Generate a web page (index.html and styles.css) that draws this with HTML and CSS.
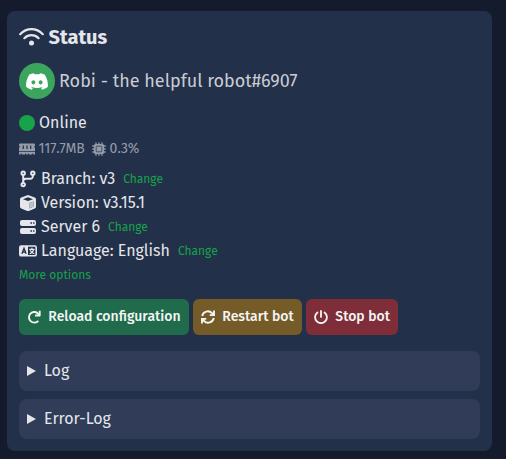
FILE: index.html
```html
<!DOCTYPE html>
<html lang="en">
<head>
<meta charset="utf-8">
<title>Status</title>
<link rel="stylesheet" href="styles.css">
</head>
<body>
<main class="card">
  <h1 class="title">
    <svg class="wifi" viewBox="0 0 25 20" fill="none" stroke="currentColor" stroke-width="2.2" stroke-linecap="round"><path d="M1.2 7.2C7.6 .4 17.4 .4 23.8 7.2M5.4 11.2C9.4 7.2 15.6 7.2 19.6 11.2"/><circle cx="12.5" cy="16" r="2.5" fill="currentColor" stroke="none"/></svg>
    <span>Status</span>
  </h1>
  <div class="bot">
    <span class="avatar"><svg viewBox="0 0 640 512" fill="currentColor"><path d="M524.531,69.836a1.5,1.5,0,0,0-.764-.7A485.065,485.065,0,0,0,404.081,32.03a1.816,1.816,0,0,0-1.923.91,337.461,337.461,0,0,0-14.9,30.6,447.848,447.848,0,0,0-134.426,0,309.541,309.541,0,0,0-15.135-30.6,1.89,1.89,0,0,0-1.924-.91A483.689,483.689,0,0,0,116.085,69.137a1.712,1.712,0,0,0-.788.676C39.068,183.651,18.186,294.69,28.43,404.354a2.016,2.016,0,0,0,.765,1.375A487.666,487.666,0,0,0,176.02,479.918a1.9,1.9,0,0,0,2.063-.676A348.2,348.2,0,0,0,208.12,430.4a1.86,1.86,0,0,0-1.019-2.588,321.173,321.173,0,0,1-45.868-21.853,1.885,1.885,0,0,1-.185-3.126c3.082-2.309,6.166-4.711,9.109-7.137a1.819,1.819,0,0,1,1.9-.256c96.229,43.917,200.41,43.917,295.5,0a1.812,1.812,0,0,1,1.924.233c2.944,2.426,6.027,4.851,9.132,7.16a1.884,1.884,0,0,1-.162,3.126,301.407,301.407,0,0,1-45.89,21.83,1.875,1.875,0,0,0-1,2.611,391.055,391.055,0,0,0,30.014,48.815,1.864,1.864,0,0,0,2.063.7A486.048,486.048,0,0,0,610.7,405.729a1.882,1.882,0,0,0,.765-1.352C623.729,277.594,590.933,167.465,524.531,69.836ZM222.491,337.58c-28.972,0-52.844-26.587-52.844-59.239S193.056,219.1,222.491,219.1c29.665,0,53.306,26.82,52.843,59.239C275.334,310.993,251.924,337.58,222.491,337.58Zm195.38,0c-28.971,0-52.843-26.587-52.843-59.239S388.437,219.1,417.871,219.1c29.667,0,53.307,26.82,52.844,59.239C470.715,310.993,447.538,337.58,417.871,337.58Z"/></svg></span>
    <span>Robi - the helpful robot#6907</span>
  </div>
  <div class="online"><i class="dot"></i><span>Online</span></div>
  <div class="usage">
    <svg class="mem" viewBox="0 0 16 12" fill="currentColor"><path fill-rule="evenodd" d="M1.2 .5h13.6A1.2 1.2 0 0 1 16 1.700v1a1.300 1.300 0 0 0 0 2.300V8H0V5a1.300 1.300 0 0 0 0-2.300v-1A1.200 1.200 0 0 1 1.200 .5ZM3.700 2.500v3.500h1.200V2.500Zm3.700 0v3.500h1.200V2.500Zm3.700 0v3.500h1.200V2.500ZM0 8.700h16v2.800h-1.800v-1.100h-1v1.100H9.900v-1.100h-1v1.100H7.100v-1.100h-1v1.100H2.800v-1.100h-1v1.100H0Z"/></svg>
    <span class="amount">117.7MB</span>
    <svg class="cpu" viewBox="0 0 14 14"><g stroke="currentColor" stroke-width="1.3" stroke-linecap="round"><path d="M4 .8v12.4M7 .8v12.4M10 .8v12.4M.8 4h12.4M.8 7h12.4M.8 10h12.4"/></g><rect x="2" y="2" width="10" height="10" rx="1.6" fill="currentColor"/><rect x="4.2" y="4.2" width="5.6" height="5.6" rx=".6" fill="none" stroke="#233049" stroke-width=".7"/></svg>
    <span>0.3%</span>
  </div>
  <ul class="info">
    <li><svg class="ic" viewBox="0 0 18 18" fill="none" stroke="currentColor" stroke-width="2"><circle cx="4.2" cy="3.2" r="1.7"/><circle cx="13.8" cy="3.2" r="1.7"/><circle cx="4.2" cy="14.6" r="1.7"/><path d="M4.2 5v8M13.8 5v1.400a2.400 2.400 0 0 1-2.400 2.400H6.800a2.600 2.600 0 0 0-2.600 2.600"/></svg><span>Branch: v3</span><a class="link">Change</a></li>
    <li><svg class="ic" viewBox="0 0 18 18" fill="currentColor"><path fill-rule="evenodd" d="M8.300 1.200a2 2 0 0 1 1.400 0l6 2.200A2 2 0 0 1 17 5.300v7.400a2 2 0 0 1-1.200 1.800l-6 2.400a2 2 0 0 1-1.600 0l-6-2.400A2 2 0 0 1 1 12.700V5.300a2 2 0 0 1 1.300-1.900ZM9 3.300 4 5.200 9 7l5-1.800ZM10.200 14.500l4.600-1.900V7.400L10.200 9.100Z"/><path d="m10.200 9.100 4.600-1.700v5.200l-4.600 1.900Z" opacity=".8"/></svg><span>Version: v3.15.1</span></li>
    <li><svg class="ic" viewBox="0 0 18 18" fill="currentColor"><path fill-rule="evenodd" d="M3 2h12a2 2 0 0 1 2 2v2a2 2 0 0 1-2 2H3a2 2 0 0 1-2-2V4a2 2 0 0 1 2-2Zm8.4 2.2v1.6H13V4.200Zm2.700 0v1.600h1.400V4.200ZM3 10h12a2 2 0 0 1 2 2v2a2 2 0 0 1-2 2H3a2 2 0 0 1-2-2v-2a2 2 0 0 1 2-2Zm8.400 2.200v1.600H13v-1.600Zm2.700 0v1.600h1.400v-1.600Z"/></svg><span>Server 6</span><a class="link">Change</a></li>
    <li><svg class="ic" viewBox="0 0 18 18"><rect x=".8" y="4" width="16.400" height="9.800" rx="1.400" fill="none" stroke="currentColor" stroke-width="1.600"/><path d="M1 4h8v10H1Z" fill="currentColor"/><path d="m2.900 11.800 2.100-5.400 2.100 5.400M3.600 10.200h2.800" fill="none" stroke="#233049" stroke-width="1.300"/><path d="M10.200 7.300h5.400M12.900 5.800v1.500M14.700 7.300c-.4 2-1.800 3.600-4 4.400M11.200 8.300c.6 1.500 2.200 2.900 4.200 3.500" fill="none" stroke="currentColor" stroke-width="1.200"/></svg><span>Language: English</span><a class="link">Change</a></li>
  </ul>
  <div class="more"><a>More options</a></div>
  <div class="actions">
    <button class="btn reload"><svg viewBox="0 0 14 14" fill="none" stroke="currentColor" stroke-width="1.900"><path d="M11.300 10.800A5.300 5.300 0 1 1 10.600 3.200L12.200 4.800"/><path d="M12.700 .8v4.700H8.100" stroke-linejoin="round"/></svg><span>Reload configuration</span></button>
    <button class="btn restart"><svg viewBox="0 0 14 14" fill="none" stroke="currentColor" stroke-width="1.900"><path d="M1.200 6A5.700 5.700 0 0 1 11 3.200L12.500 4.700M13 .6v4.500H8.700M12.800 8A5.700 5.700 0 0 1 3 10.800L1.500 9.300M1 13.400V8.900h4.300"/></svg><span>Restart bot</span></button>
    <button class="btn stop"><svg viewBox="0 0 14 14" fill="none" stroke="currentColor" stroke-width="1.800" stroke-linecap="round"><path d="M7 .9v6M3.500 2.500a5.900 5.900 0 1 0 7 0"/></svg><span>Stop bot</span></button>
  </div>
  <div class="panel"><i class="tri"></i><span>Log</span></div>
  <div class="panel"><i class="tri"></i><span>Error-Log</span></div>
</main>
</body>
</html>
```
FILE: styles.css
```css
* { box-sizing: border-box; }
body {
  margin: 0;
  padding: 11px 14px 8px 7px;
  height: 459px;
  background: #131b2d;
  color: #e4e6eb;
  font: 16px/24px "Fira Sans", "Open Sans", "Noto Sans", sans-serif;
  white-space: nowrap;
}
svg { display: block; flex: none; }
.card { height: 440px; padding: 12px; border-radius: 8px; background: #233049; }
.title { display: flex; align-items: center; gap: 5px; height: 28px; margin: 0; font-size: 20px; font-weight: 700; }
.title span { margin-left: -.5px; }
.wifi { width: 25px; height: 20px; }
.bot { display: flex; align-items: center; gap: 4px; height: 36px; margin-top: 12px; font-size: 18px; color: #c9ccd4; }
.avatar { display: grid; place-items: center; width: 36px; height: 36px; border-radius: 50%; background: #3ba55d; color: #fff; }
.avatar svg { width: 24px; height: 19px; }
.online { display: flex; align-items: center; gap: 4px; height: 24px; margin-top: 12px; }
.dot { width: 16px; height: 16px; border-radius: 50%; background: #16a34a; }
.usage { display: flex; align-items: center; gap: 3.500px; height: 20px; margin-top: 4px; font-size: 14px; color: #959ca9; }
.amount { letter-spacing: -.15px; }
.mem { width: 16px; height: 12px; }
.cpu { width: 14px; height: 14px; margin-left: 4px; }
.info { list-style: none; margin: 8px 0 0; padding: 0; }
.info li { display: flex; align-items: center; height: 24px; }
.ic { width: 18px; height: 18px; margin-right: 4px; }
.link { margin-left: 8px; font-size: 12px; color: #16a34a; }
.more { height: 24px; font-size: 12px; color: #16a34a; }
.actions { display: flex; gap: 4px; margin-top: 12px; }
.btn { display: flex; align-items: center; gap: 7.300px; height: 36px; padding: 0 8px; border: 0; border-radius: 6px; color: #f4f6f5; font: inherit; font-size: 14px; font-weight: 500; }
.btn svg { width: 14px; height: 14px; }
.reload { width: 170px; background: #1f6b4b; }
.restart { width: 109px; background: #745b28; }
.stop { width: 92px; background: #7f2d39; }
.panel { display: flex; align-items: center; height: 40px; margin-top: 8px; padding-left: 8px; border-radius: 8px; background: #303c58; }
.actions + .panel { margin-top: 16px; }
.tri { width: 9px; height: 10px; margin-right: 8px; background: #e4e6eb; clip-path: polygon(0 0, 100% 50%, 0 100%); }
```
